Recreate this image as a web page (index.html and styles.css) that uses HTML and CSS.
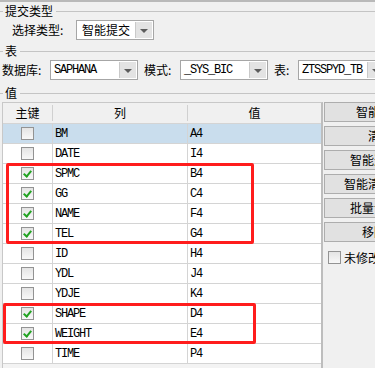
FILE: index.html
```html
<!DOCTYPE html>
<html lang="zh-CN">
<head>
  <meta charset="UTF-8">
  <title>提交</title>
<link rel="stylesheet" href="styles.css">
</head>
<body>
<div class="topbar"></div>

<div class="legend"><span>提交类型</span></div>
<div class="row row-type">
  <span class="label l-type">选择类型:</span>
  <div class="combo c-type"><span class="combo-text">智能提交</span><span class="combo-btn"></span></div>
</div>

<div class="legend legend-table"><span>表</span></div>
<div class="row row-table">
  <span class="label l-db">数据库:</span>
  <div class="combo"><span class="combo-text mono">SAPHANA</span><span class="combo-btn"></span></div>
  <span class="label l-schema">模式:</span>
  <div class="combo"><span class="combo-text mono">_SYS_BIC</span><span class="combo-btn"></span></div>
  <span class="label l-tab">表:</span>
  <div class="combo"><span class="combo-text mono">ZTSSPYD_TB</span><span class="combo-btn"></span></div>
</div>

<div class="legend legend-values"><span>值</span></div>
<div class="main">
  <div class="grid">
    <div class="grid-head">
      <div class="hcell">主键</div>
      <div class="hcell">列</div>
      <div class="hcell">值</div>
    </div>
    <div class="grid-row selected"><div class="cell key"><span class="check"></span></div><div class="cell mono">BM</div><div class="cell mono">A4</div></div>
    <div class="grid-row"><div class="cell key"><span class="check"></span></div><div class="cell mono">DATE</div><div class="cell mono">I4</div></div>
    <div class="grid-row"><div class="cell key"><span class="check on"></span></div><div class="cell mono">SPMC</div><div class="cell mono">B4</div></div>
    <div class="grid-row"><div class="cell key"><span class="check on"></span></div><div class="cell mono">GG</div><div class="cell mono">C4</div></div>
    <div class="grid-row"><div class="cell key"><span class="check on"></span></div><div class="cell mono">NAME</div><div class="cell mono">F4</div></div>
    <div class="grid-row"><div class="cell key"><span class="check on"></span></div><div class="cell mono">TEL</div><div class="cell mono">G4</div></div>
    <div class="grid-row"><div class="cell key"><span class="check"></span></div><div class="cell mono">ID</div><div class="cell mono">H4</div></div>
    <div class="grid-row"><div class="cell key"><span class="check"></span></div><div class="cell mono">YDL</div><div class="cell mono">J4</div></div>
    <div class="grid-row"><div class="cell key"><span class="check"></span></div><div class="cell mono">YDJE</div><div class="cell mono">K4</div></div>
    <div class="grid-row"><div class="cell key"><span class="check on"></span></div><div class="cell mono">SHAPE</div><div class="cell mono">D4</div></div>
    <div class="grid-row"><div class="cell key"><span class="check on"></span></div><div class="cell mono">WEIGHT</div><div class="cell mono">E4</div></div>
    <div class="grid-row"><div class="cell key"><span class="check"></span></div><div class="cell mono">TIME</div><div class="cell mono">P4</div></div>
  </div>

  <div class="side">
    <button class="btn">智能提交</button>
    <button class="btn">清除</button>
    <button class="btn">智能选主键</button>
    <button class="btn">智能清除主键</button>
    <button class="btn">批量设置值</button>
    <button class="btn">移除键</button>
    <label class="opt"><span class="check"></span>未修改的值不提交</label>
  </div>
</div>

<!-- 标注框 -->
<div class="mark mark-1"></div>
<div class="mark mark-2"></div>
</body>
</html>
```

FILE: styles.css
```css
html, body {
  overflow: hidden;
}
* {
  box-sizing: border-box;
}
body {
  position: relative;
  margin: 0;
  width: 375px;
  height: 368px;
  background: #f0f0f0;
  color: #000;
  font-family: "Noto Sans CJK SC", "Noto Sans", sans-serif;
  font-size: 12px;
  line-height: 1;
  white-space: nowrap;
}
.mono {
  font-family: "Liberation Mono", "DejaVu Sans Mono", monospace;
  font-size: 12px;
  letter-spacing: -1.2px;
}
.topbar {
  height: 2px;
  background: #b9b9b9;
}
.legend {
  display: flex;
  align-items: center;
  height: 18px;
}
.legend-table {
  margin-top: 2px;
}
.legend-values {
  margin-top: 4px;
}
.legend::before,
.legend::after {
  content: '';
  border-top: 1px solid #c4c4c4;
}
.legend::before {
  width: 3px;
  margin-right: 2px;
}
.legend::after {
  flex: 1;
  margin-left: 3px;
}
.row {
  display: flex;
  align-items: center;
  height: 20px;
}
.row-type {
  padding-left: 12px;
}
.row-table {
  padding-left: 2px;
}
.label {
  flex: none;
}
.l-type { width: 64px; }
.l-db { width: 48px; }
.l-schema { width: 36px; margin-left: 6px; }
.l-tab { width: 24px; margin-left: 6px; }
.combo {
  flex: none;
  display: flex;
  width: 88px;
  height: 20px;
  border: 1px solid #a6a6a6;
  background: #fff;
}
.c-type {
  width: 78px;
}
.combo-text {
  flex: 1;
  display: flex;
  align-items: center;
  padding-left: 5px;
  overflow: hidden;
}
.combo-text.mono {
  padding-left: 3px;
}
.combo-btn {
  flex: none;
  position: relative;
  width: 17px;
  margin: 1px;
  background: #e3e3e3;
  border-left: 1px solid #c9c9c9;
}
.combo-btn::after {
  content: '';
  position: absolute;
  left: 4px;
  top: 7px;
  border-left: 4px solid transparent;
  border-right: 4px solid transparent;
  border-top: 4px solid #5c5c5c;
}
.main {
  display: flex;
  align-items: flex-start;
}
.grid {
  flex: none;
  width: 321px;
  height: 270px;
  margin-left: 2px;
  background: #f3f3f3;
  border: 1px solid #c8c8c8;
  border-right: 2px solid #bdbdbd;
}
.grid-head,
.grid-row {
  display: grid;
  grid-template-columns: 50px 135px 1fr;
  height: 20px;
}
.grid-head {
  height: 21px;
  background: #f0f0f0;
  border-bottom: 1px solid #d4d4d4;
}
.hcell {
  display: flex;
  align-items: center;
  justify-content: center;
  border-right: 1px solid #d0d0d0;
  margin: 2px 0;
}
.hcell:last-child {
  border-right: none;
}
.grid-row {
  background: #fff;
  border-bottom: 1px solid #d4d4d4;
}
.grid-row.selected {
  background: #c9dded;
}
.cell {
  display: flex;
  align-items: center;
  padding-left: 2px;
  border-right: 1px solid #d4d4d4;
}
.cell:last-child {
  border-right: none;
}
.cell.key {
  justify-content: center;
  padding-left: 0;
}
.check {
  flex: none;
  position: relative;
  width: 13px;
  height: 13px;
  border: 1px solid #939393;
  background: linear-gradient(#e4e4e4, #f8f8f8);
}
.check.on::after {
  content: '';
  position: absolute;
  left: 3px;
  top: 1px;
  width: 3px;
  height: 6px;
  border-right: 2px solid #22a322;
  border-bottom: 2px solid #22a322;
  transform: rotate(40deg);
}
.side {
  flex: none;
  display: flex;
  flex-direction: column;
  gap: 4px;
  width: 112px;
  margin-left: 1px;
}
.btn {
  height: 20px;
  padding: 0;
  border: 1px solid #adadad;
  background: #e1e1e1;
  font: inherit;
  color: #000;
}
.opt {
  display: flex;
  align-items: center;
  gap: 3px;
  margin: 5px 0 0 4px;
}
.mark {
  position: absolute;
  border: 3px solid #ff1c1c;
  border-radius: 2px;
}
.mark-1 {
  left: 6px;
  top: 163px;
  width: 248px;
  height: 81px;
}
.mark-2 {
  left: 3px;
  top: 303px;
  width: 253px;
  height: 41px;
}
```
